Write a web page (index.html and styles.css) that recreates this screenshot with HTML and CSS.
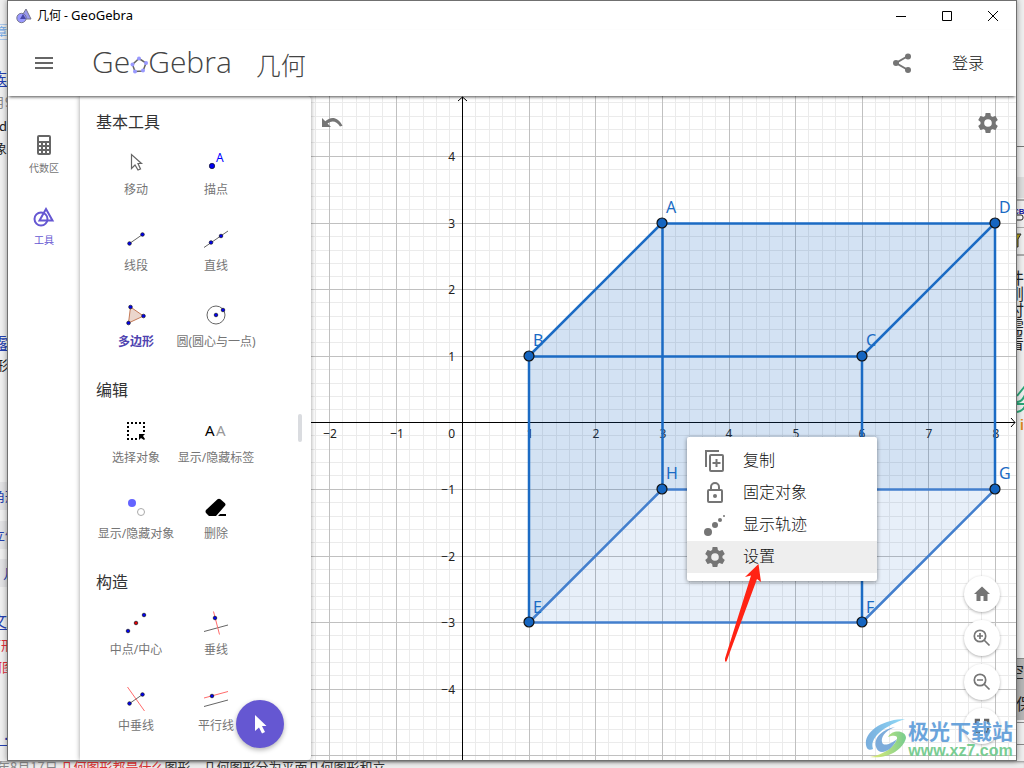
FILE: index.html
```html
<!DOCTYPE html>
<html lang="zh-CN">
<head>
<meta charset="utf-8">
<title>几何 - GeoGebra</title>
<link rel="stylesheet" href="styles.css">
</head>
<body class="desktop">
<svg class="strip" aria-hidden="true">
  <rect width="8" height="100%" fill="#efefef"/>
  <path d="M0 24.500h8M0 39.500h8" stroke="#a9c8ec"/>
  <path d="M0 482h8v28h-8zM0 521h8v28h-8zM0 559h8v28h-8z" fill="#e2e2e4"/>
  <g class="strip-text">
    <text x="-4" y="36" class="t11 sky">章</text>
    <text x="-9" y="85" class="t16 link">族</text>
    <text x="-8" y="107" class="t13 grey">月9</text>
    <text x="-1" y="131" class="t13">d</text>
    <text x="-6" y="153" class="t13">象</text>
    <text x="-8" y="349" class="t16 link">露</text>
    <text x="-5" y="370" class="t13">形</text>
    <text x="-8" y="501" class="t13 link">角形</text>
    <text x="-8" y="540" class="t13 link">立体</text>
    <text x="3" y="578" class="t13 link">几</text>
    <text x="-9" y="627" class="t16 link">文</text>
    <text x="-12" y="650" class="t13 red">何形</text>
    <text x="-11" y="672" class="t13 red">何图</text>
    <text x="4" y="740" class="t16 link">.</text>
  </g>
  <path d="M0 86.500h8M0 350.500h8M0 629.500h8M0 745.500h8" stroke="#2440b0"/>
</svg>

<main class="window">
  <div class="titlebar">
    <svg width="16" height="16" viewBox="0 0 16 16"><path d="M10 1l5 10H4z" fill="#9999ee" stroke="#77778c"/><circle cx="5.500" cy="10" r="4.700" fill="#9999ff" stroke="#77778c"/><path d="M7 6l3 5H4z" fill="#4848a8"/></svg>
    <span class="titlebar-text">几何 - <span class="titlebar-app">GeoGebra</span></span>
    <div class="window-controls">
      <button aria-label="最小化"><svg width="12" height="12"><path d="M1 6.500h10"/></svg></button>
      <button aria-label="最大化"><svg width="12" height="12"><path d="M1.500 1.500h9v9h-9z"/></svg></button>
      <button aria-label="关闭"><svg width="12" height="12"><path d="M1 1l10 10M11 1L1 11"/></svg></button>
    </div>
  </div>

  <header class="header">
    <button class="menu-button" aria-label="菜单"><svg width="18" height="12"><path d="M0 1h18M0 6h18M0 11h18" stroke="#666" stroke-width="2"/></svg></button>
    <div class="logo"><span>Ge</span><svg width="18" height="18" viewBox="0 0 18 18"><path d="M9 2.500L16 7l-3 8-8 .5L2.500 8.500z" fill="none" stroke="#666" stroke-width="1.500"/><g fill="#9999ff"><circle cx="9" cy="2.500" r="2"/><circle cx="16" cy="7" r="2"/><circle cx="13" cy="14.500" r="2"/><circle cx="5" cy="15.500" r="2"/><circle cx="2.500" cy="8.500" r="2"/></g></svg><span>Gebra</span></div>
    <h1 class="app-name">几何</h1>
    <button class="share-button" aria-label="分享"><svg width="20" height="20" viewBox="0 0 20 20"><path d="M16 3L4 10l12 7" fill="none" stroke="#757575" stroke-width="2"/><g fill="#757575"><circle cx="16" cy="3.500" r="3"/><circle cx="4" cy="10" r="3"/><circle cx="16" cy="17" r="3"/></g></svg></button>
    <button class="login-button">登录</button>
  </header>

  <div class="workspace">
    <nav class="nav">
      <button class="nav-item"><svg width="24" height="24" viewBox="0 0 24 24"><rect x="5" y="2" width="14" height="20" rx="2" fill="#666"/><path d="M7 4h10v4H7zM7 10h2v2H7zM11 10h2v2h-2zM15 10h2v2h-2zM7 14h2v2H7zM11 14h2v2h-2zM15 14h2v2h-2zM7 18h2v2H7zM11 18h2v2h-2zM15 18h2v2h-2z" fill="#fff"/></svg>代数区</button>
      <button class="nav-item nav-active"><svg width="24" height="24" viewBox="0 0 24 24" fill="none" stroke="#6557d2" stroke-width="2"><circle cx="9" cy="14" r="6.500"/><path d="M14 4l6.500 11.500h-13z"/></svg>工具</button>
    </nav>

    <aside class="tools">
      <section>
        <h2>基本工具</h2>
        <div class="tool-grid">
          <button class="tool"><svg viewBox="0 0 32 32"><path d="M11.500 7.500v14l3.500-3.500 3 5 2.500-1-2.500-5.500h3.500z" fill="#fff" stroke="#666" stroke-width="1.200"/></svg>移动</button>
          <button class="tool"><svg viewBox="0 0 32 32"><circle cx="12" cy="19" r="2.700" class="dot"/><text x="16" y="15" class="point-letter">A</text></svg>描点</button>
          <button class="tool"><svg viewBox="0 0 32 32"><path d="M9.500 20.500l13-9" class="ln"/><circle cx="9.500" cy="20.500" r="1.800" class="dot"/><circle cx="22.500" cy="11.500" r="1.800" class="dot"/></svg>线段</button>
          <button class="tool"><svg viewBox="0 0 32 32"><path d="M4 24.500L28 8" class="ln"/><circle cx="11" cy="19.500" r="1.800" class="dot"/><circle cx="21" cy="13" r="1.800" class="dot"/></svg>直线</button>
          <button class="tool tool-active"><svg viewBox="0 0 32 32"><path d="M10.500 8l13 9-15 7z" fill="#ebd6cc" stroke="#c47a58"/><circle cx="10.500" cy="8" r="1.800" class="dot"/><circle cx="23.500" cy="17" r="1.800" class="dot"/><circle cx="8.500" cy="24" r="1.800" class="dot"/></svg>多边形</button>
          <button class="tool"><svg viewBox="0 0 32 32"><circle cx="16" cy="16" r="9" fill="none" stroke="#666"/><circle cx="16" cy="16" r="1.800" class="dot"/><circle cx="23" cy="11" r="1.800" class="dot"/></svg>圆(圆心与一点)</button>
        </div>
      </section>
      <section>
        <h2>编辑</h2>
        <div class="tool-grid">
          <button class="tool"><svg viewBox="0 0 32 32"><path d="M7 8h18M8 11v14M24 11v6M11 24h6" fill="none" stroke="#000" stroke-width="2" stroke-dasharray="2 2"/><path d="M19 19h6l-2 2 2 3-1 1-3-2-2 2z"/></svg>选择对象</button>
          <button class="tool"><svg viewBox="0 0 32 32"><text x="5" y="21" class="aa">A</text><text x="16" y="21" class="aa aa-light">A</text></svg>显示/隐藏标签</button>
          <button class="tool"><svg viewBox="0 0 32 32"><circle cx="12" cy="12" r="4" fill="#6464ff"/><circle cx="21" cy="21" r="3.500" fill="#fff" stroke="#aaa"/></svg>显示/隐藏对象</button>
          <button class="tool"><svg viewBox="0 0 32 32"><path d="M17.500 8.200q1.500-1 3 0l4.500 4q1 1.300 0 2.600L16 25h-7l-3-3q-1-1.500 0-3zM20 23h6v2h-8z"/></svg>删除</button>
        </div>
      </section>
      <section>
        <h2>构造</h2>
        <div class="tool-grid">
          <button class="tool"><svg viewBox="0 0 32 32"><circle cx="8" cy="24" r="1.800" class="dot"/><circle cx="16" cy="16" r="1.800" class="dot red-dot"/><circle cx="24" cy="8" r="1.800" class="dot"/></svg>中点/中心</button>
          <button class="tool"><svg viewBox="0 0 32 32"><path d="M4 24.500L28 18" class="ln"/><path d="M13.500 4.500l6 23" class="ln red-ln"/><circle cx="15" cy="11" r="1.800" class="dot"/></svg>垂线</button>
          <button class="tool"><svg viewBox="0 0 32 32"><path d="M9.500 20.500l13-9" class="ln"/><path d="M7.500 4l17 24" class="ln red-ln"/><circle cx="9.500" cy="20.500" r="1.800" class="dot"/><circle cx="22.500" cy="11.500" r="1.800" class="dot"/></svg>中垂线</button>
          <button class="tool"><svg viewBox="0 0 32 32"><path d="M4 23.500L28 17" class="ln"/><path d="M4 15L28 8.500" class="ln red-ln"/><circle cx="12" cy="13" r="1.800" class="dot"/></svg>平行线</button>
        </div>
      </section>
      <div class="scroll-thumb"></div>
      <button class="fab" aria-label="移动"><svg width="24" height="24" viewBox="0 0 24 24"><path d="M7 3v16l4-3.500 3 6 3-1.500-3-6h4.500z" fill="#fff"/></svg></button>
    </aside>

    <div class="canvas">
      <svg class="graph" viewBox="311 96 705 664" preserveAspectRatio="xMinYMin slice" role="img" aria-label="长方体">
        <defs>
          <path id="minor-v" d="M13.500 0v1000M27.500 0v1000M40.500 0v1000M53.500 0v1000"/>
          <path id="major-v" d="M.5 0v1000"/>
          <path id="minor-h" d="M0 13.500h1200M0 27.500h1200M0 40.500h1200M0 53.500h1200"/>
          <path id="major-h" d="M0 .5h1200"/>
        </defs>
        <g class="minor">
          <use href="#minor-v" x="262"/><use href="#minor-v" x="329"/><use href="#minor-v" x="396"/><use href="#minor-v" x="462"/><use href="#minor-v" x="529"/><use href="#minor-v" x="595"/><use href="#minor-v" x="662"/><use href="#minor-v" x="729"/><use href="#minor-v" x="795"/><use href="#minor-v" x="862"/><use href="#minor-v" x="928"/><use href="#minor-v" x="995"/>
          <use href="#minor-h" y="89"/><use href="#minor-h" y="156"/><use href="#minor-h" y="223"/><use href="#minor-h" y="289"/><use href="#minor-h" y="356"/><use href="#minor-h" y="422"/><use href="#minor-h" y="489"/><use href="#minor-h" y="556"/><use href="#minor-h" y="622"/><use href="#minor-h" y="689"/>
        </g>
        <g class="major">
          <use href="#major-v" x="329"/><use href="#major-v" x="396"/><use href="#major-v" x="529"/><use href="#major-v" x="595"/><use href="#major-v" x="662"/><use href="#major-v" x="729"/><use href="#major-v" x="795"/><use href="#major-v" x="862"/><use href="#major-v" x="928"/><use href="#major-v" x="995"/>
          <use href="#major-h" y="156"/><use href="#major-h" y="223"/><use href="#major-h" y="289"/><use href="#major-h" y="356"/><use href="#major-h" y="489"/><use href="#major-h" y="556"/><use href="#major-h" y="622"/><use href="#major-h" y="689"/><use href="#major-h" y="755"/>
        </g>
        <g class="axis"><path d="M462.500 97v663M458 101l4.500-4 4.500 4M311 422.500h704M1011 418l4 4.500-4 4.500"/></g>
        <g class="ticks tick-x">
          <text x="330" y="438">−2</text><text x="397" y="438">−1</text><text x="530" y="438">1</text><text x="596" y="438">2</text><text x="663" y="438">3</text><text x="729" y="438">4</text><text x="796" y="438">5</text><text x="862" y="438">6</text><text x="929" y="438">7</text><text x="996" y="438">8</text>
        </g>
        <g class="ticks tick-y">
          <text x="455" y="161">4</text><text x="455" y="228">3</text><text x="455" y="294">2</text><text x="455" y="361">1</text><text x="455" y="438">0</text><text x="455" y="494">−1</text><text x="455" y="561">−2</text><text x="455" y="627">−3</text><text x="455" y="694">−4</text>
        </g>
        <g>
          <path class="face" d="M662 223H995V489H662L529 622V356z"/>
          <path class="face face-light" d="M662 489H995L862 622H529z"/>
          <path class="edge edge-light" d="M662 489.500H995L862 622.500H529z"/>
          <path class="edge" d="M662 223.500H995V489M662 223L529 356V622M529 356.500H862V622M862 356L995 223M662.500 223V489"/>
          <g class="vertex">
            <circle cx="662" cy="223" r="5"/><circle cx="995" cy="223" r="5"/><circle cx="529" cy="356" r="5"/><circle cx="862" cy="356" r="5"/><circle cx="529" cy="622" r="5"/><circle cx="862" cy="622" r="5"/><circle cx="662" cy="489" r="5"/><circle cx="995" cy="489" r="5"/>
          </g>
        </g>
        <g class="vertex-name">
          <text x="666" y="213">A</text><text x="999" y="213">D</text><text x="533" y="346">B</text><text x="866" y="346">C</text><text x="533" y="613">E</text><text x="866" y="613">F</text><text x="666" y="479">H</text><text x="999" y="479">G</text>
        </g>
      </svg>

      <button class="undo" aria-label="撤销"><svg width="24" height="24" viewBox="0 0 24 24"><path d="M2 7v9h9l-3.500-3.500q7-5 12.500 3l2.500-.8C17 4.500 10 6 5.300 10.300z" fill="#757575"/></svg></button>
      <button class="settings" aria-label="设置"><svg width="24" height="24" viewBox="0 0 24 24"><use href="#gear"/></svg></button>

      <div class="view-buttons">
        <button aria-label="标准视图"><svg width="20" height="20" viewBox="0 0 20 20"><path d="M10 2.500L2 10h2.500v7h4v-5h3v5h4v-7H18z" fill="#757575"/></svg></button>
        <button aria-label="放大"><svg width="20" height="20" viewBox="0 0 20 20"><g fill="none" stroke="#757575" stroke-width="1.700"><circle cx="8" cy="8" r="5.700"/><path d="M12 12l5.500 5.500M5 8h6M8 5v6"/></g></svg></button>
        <button aria-label="缩小"><svg width="20" height="20" viewBox="0 0 20 20"><g fill="none" stroke="#757575" stroke-width="1.700"><circle cx="8" cy="8" r="5.700"/><path d="M12 12l5.500 5.500M5 8h6"/></g></svg></button>
        <button aria-label="全屏"><svg width="20" height="20" viewBox="0 0 20 20"><path d="M4 8V4h4M12 4h4v4M16 12v4h-4M8 16H4v-4" fill="none" stroke="#666" stroke-width="2.500"/></svg></button>
      </div>

      <div class="context-menu" role="menu">
        <button role="menuitem"><svg width="24" height="24" viewBox="0 0 24 24"><g fill="none" stroke="#757575" stroke-width="2"><path d="M3 18V2h13"/><rect x="7" y="6" width="13" height="16" rx="1"/><path d="M9.500 14h8M13.500 10v8"/></g></svg><span>复制</span></button>
        <button role="menuitem"><svg width="24" height="24" viewBox="0 0 24 24"><g fill="none" stroke="#757575" stroke-width="2"><rect x="5" y="9" width="14" height="12" rx="1"/><path d="M8 9V6a4 4 0 0 1 8 0v3"/></g><circle cx="12" cy="15" r="2" fill="#757575"/></svg><span>固定对象</span></button>
        <button role="menuitem"><svg width="24" height="24" viewBox="0 0 24 24"><g fill="#757575"><circle cx="5" cy="19" r="4"/><circle cx="12" cy="12" r="3"/><circle cx="17" cy="7" r="2"/><circle cx="21" cy="3" r="1"/></g></svg><span>显示轨迹</span></button>
        <button role="menuitem" class="current"><svg width="24" height="24" viewBox="0 0 24 24"><path id="gear" fill="#757575" d="M19.430 12.980c.04-.32.07-.64.07-.98s-.03-.66-.07-.98l2.110-1.650c.19-.15.24-.42.12-.64l-2-3.460c-.12-.22-.39-.3-.61-.22l-2.490 1c-.52-.4-1.080-.73-1.690-.98l-.38-2.650A.49.49 0 0 0 14 2h-4c-.25 0-.46.18-.49.42l-.38 2.650c-.61.25-1.170.59-1.690.98l-2.490-1c-.23-.09-.49 0-.61.22l-2 3.460c-.13.22-.07.49.12.64l2.110 1.650c-.04.32-.07.65-.07.98s.03.66.07.98l-2.110 1.650c-.19.15-.24.42-.12.64l2 3.460c.12.22.39.3.61.22l2.490-1c.52.4 1.080.73 1.690.98l.38 2.650c.03.24.24.42.49.42h4c.25 0 .46-.18.49-.42l.38-2.650c.61-.25 1.170-.59 1.690-.98l2.490 1c.23.09.49 0 .61-.22l2-3.460c.12-.22.07-.49-.12-.64zM12 15.800a3.800 3.800 0 1 1 0-7.600 3.800 3.800 0 0 1 0 7.600z"/></svg><span>设置</span></button>
      </div>
      <svg class="pointer-arrow" viewBox="724 564 38 98" aria-hidden="true"><path d="M758.500 564l2.500 18-4-3-30.500 82.500-1.500 0v-3l26-83-6 1.500z" fill="#ff2314"/></svg>

      <div class="watermark">
        <svg width="44" height="42" viewBox="0 0 44 42"><defs><linearGradient id="blue-fade" x1="0" x2="1"><stop stop-color="#6aa5da"/><stop offset="1" stop-color="#85d8f8"/></linearGradient><linearGradient id="green-fade" x1="0" x2="1"><stop stop-color="#e5ee67"/><stop offset="1" stop-color="#6ac884"/></linearGradient></defs><path d="M41 1C20 1 0 13 2 27c1 6 5 5 7 4C5 20 20 8 41 1z" fill="url(#blue-fade)"/><path d="M6 39C24 41 39 32 42 20c0-8-14-9-18-1 5-2 10-2 9 2C31 28 20 37 6 39z" fill="url(#green-fade)"/><path d="M12 29c-3-10 8-18 19-20-11 4-14 11-13 15 1 5 9 2 15-3-5 12-18 18-21 8z" fill="#6fa4d8"/></svg>
        <div><strong>极光下载站</strong><span>www.xz7.com</span></div>
      </div>
    </div>
  </div>
</main>

<svg class="strip" aria-hidden="true">
  <rect width="8" height="100%" fill="#eeeeee"/>
  <path d="M0 146.500h8" stroke="#777"/>
  <path d="M0 177h8v21h-8z" fill="#dcdcdc"/>
  <path d="M0 200h8M0 255h8" stroke="#aaa" stroke-width="2"/>
  <path d="M0 227.500h8" stroke="#aaa"/>
  <text x="-4" y="214" class="cb">CB</text>
  <rect x="-3" y="215" width="9" height="5" rx="2" fill="#fff" stroke="#222"/>
  <path d="M-1 234h5l-3 5v8h-2z" fill="#b7a319" stroke="#333"/>
  <g class="strip-text">
    <text x="-9" y="284" class="t16">件</text><text x="-9" y="300" class="t16">刚</text><text x="-9" y="316" class="t16">时</text><text x="-9" y="333" class="t16">需</text><text x="-9" y="349" class="t16">看</text>
  </g>
  <path d="M0 396l8-10M0 402q5 0 8-7M0 404h8M0 412q6-1 8-6" fill="none" stroke="#2aa677" stroke-width="2"/>
  <text x="3" y="430" class="orange-i">i</text>
  <rect y="659" width="8" height="61" fill="#b5b5b5"/>
  <path d="M0 658.500h8M0 722.500h8M0 744.500h8" stroke="#888"/>
  <g class="strip-text"><text x="-9" y="678" class="t16">空</text><text x="-1" y="710" class="t16">保</text></g>
</svg>

<div class="ticker"><span class="date">年8月17日</span> <em>几何图形都是什么</em>图形，几何图形分为平面几何图形和立</div>
</body>
</html>
```

FILE: styles.css
```css
* { box-sizing: border-box; }

body, button {
  font-family: "Noto Sans", "Noto Sans CJK SC", sans-serif;
}

button {
  padding: 0;
  border: 0;
  background: none;
  color: inherit;
  cursor: pointer;
}

svg { display: block; flex: none; }

.desktop {
  margin: 0;
  height: 100vh;
  display: grid;
  grid-template-columns: 7px minmax(0, 1fr) 7px;
  grid-template-rows: minmax(0, 1fr) 7px;
  background: #ececec;
  overflow: hidden;
}

.strip { width: 7px; height: 100%; overflow: hidden; }
.strip-text { font-family: "Noto Sans CJK SC", sans-serif; fill: #222; }
.t11 { font-size: 11px; }
.t13 { font-size: 13px; }
.t16 { font-size: 16px; }
.sky { fill: #6ea6e6; }
.link { fill: #2440b0; }
.grey { fill: #888; }
.red { fill: #e0303a; }
.cb { font: bold 8px "Liberation Sans", sans-serif; fill: #1414a0; }
.orange-i { font: bold 14px "Liberation Sans", sans-serif; fill: #e08a1e; }

.ticker {
  grid-column: 1 / -1;
  overflow: hidden;
  white-space: nowrap;
  font-family: "Noto Sans CJK SC", sans-serif;
  font-size: 13px;
  line-height: 12px;
  color: #333;
  text-indent: -3px;
  box-shadow: inset 0 3px 3px -2px #888;
}
.ticker em { font-style: normal; color: #dc3232; }
.date { color: #888; }

/* Window frame */
.window {
  display: flex;
  flex-direction: column;
  background: #fff;
  border: 1px solid #707070;
  box-shadow: 0 0 6px rgba(0, 0, 0, .4);
  position: relative;
  overflow: hidden;
}

.titlebar {
  display: flex;
  align-items: center;
  gap: 5px;
  height: 29px;
  padding-left: 8px;
  flex: none;
}
.titlebar-text { font-size: 12px; line-height: 18px; color: #000; }
.titlebar-app { font-size: 13px; }
.window-controls { display: flex; margin-left: auto; }
.window-controls button { width: 46px; height: 29px; display: grid; place-items: center; }
.window-controls path { fill: none; stroke: #000; }

.header {
  display: flex;
  align-items: center;
  height: 66px;
  flex: none;
  color: #666;
  background: #fff;
  box-shadow: 0 2px 3px -1px rgba(0, 0, 0, .7);
  position: relative;
  z-index: 3;
}
.menu-button { width: 72px; height: 48px; display: grid; place-items: center; }
.logo {
  display: flex;
  align-items: center;
  margin-left: 12px;
  font-family: "Open Sans", "Noto Sans", sans-serif;
  font-weight: 300;
  font-size: 30px;
  line-height: 40px;
  padding-bottom: 2px;
  color: #444;
}
.logo svg { margin-top: 6px; }
.app-name {
  margin: 0 0 0 24px;
  padding-top: 2px;
  font-family: "Noto Sans CJK SC", sans-serif;
  font-size: 25px;
  font-weight: 300;
  line-height: 32px;
  color: #444;
}
.share-button { margin-left: auto; width: 40px; height: 40px; display: grid; place-items: center; }
.login-button { margin: 0 32px 0 30px; padding-bottom: 3px; font-size: 16px; font-weight: 300; color: #111; }

.workspace { display: flex; flex: 1; min-height: 0; }

/* Left navigation */
.nav { width: 72px; flex: none; padding-top: 25px; background: #fff; }
.nav-item {
  display: flex;
  flex-direction: column;
  align-items: center;
  gap: 3px;
  width: 100%;
  height: 72px;
  padding-top: 12px;
  font-size: 10px;
  line-height: 16px;
  color: #757575;
}
.nav-active { color: #6557d2; }

/* Tool panel */
.tools {
  position: relative;
  z-index: 2;
  width: 231px;
  flex: none;
  padding: 6px 16px 0;
  background: #fff;
  border-radius: 0 4px 4px 0;
  box-shadow: 0 0 5px rgba(0, 0, 0, .4);
}
.tools h2 {
  margin: 0;
  font-size: 16px;
  font-weight: 400;
  line-height: 40px;
  color: #333;
}
.tool-grid { display: grid; grid-template-columns: 80px 80px; }
.tool {
  display: flex;
  flex-direction: column;
  align-items: center;
  gap: 1px;
  height: 76px;
  padding-top: 5px;
  font-size: 12px;
  line-height: 20px;
  color: #757575;
  white-space: nowrap;
}
.tool svg { width: 32px; height: 32px; }
.tool-active { color: #4f43b0; font-weight: 700; }
.dot { fill: #0000f0; stroke: #112; stroke-width: .7; }
.red-dot { fill: #e00000; }
.ln { fill: none; stroke: #666; }
.red-ln { stroke: #ff6b6b; }
.point-letter { font: 12px "Noto Sans", sans-serif; fill: #00f; }
.aa { font: 15px "Noto Sans", sans-serif; fill: #000; }
.aa-light { fill: #999; }

.scroll-thumb {
  position: absolute;
  right: 9px;
  top: 318px;
  width: 4px;
  height: 28px;
  border-radius: 2px;
  background: #dadce0;
}
.fab {
  position: absolute;
  right: 27px;
  bottom: 12px;
  width: 48px;
  height: 48px;
  display: grid;
  place-items: center;
  border-radius: 50%;
  background: #6557d2;
  box-shadow: 0 2px 5px rgba(0, 0, 0, .3);
}

/* Graphics view */
.canvas { position: relative; flex: 1; min-width: 0; overflow: hidden; }
.graph { width: 100%; height: 100%; }
.minor, .major, .axis { fill: none; }
.minor { stroke: #ebebeb; }
.major { stroke: #c0c0c0; }
.axis { stroke: #000; }
.ticks { font: 12px "Noto Sans", sans-serif; fill: #222; }
.tick-x { text-anchor: middle; }
.tick-y { text-anchor: end; }
.face { fill: #1565c0; fill-opacity: .19; }
.face-light { fill-opacity: .1; }
.edge { fill: none; stroke: #1b6bc4; stroke-width: 2.500; stroke-linejoin: round; }
.edge-light { stroke: #437fcd; }
.vertex { fill: #1565c0; stroke: #111; stroke-width: 1.200; }
.vertex-name { font: 16px "Noto Sans", sans-serif; fill: #1b6bc4; }

.undo { position: absolute; left: 9px; top: 15px; }
.settings { position: absolute; right: 16px; top: 15px; }

.view-buttons {
  position: absolute;
  right: 16px;
  bottom: 16px;
  display: flex;
  flex-direction: column;
  gap: 8px;
}
.view-buttons button {
  width: 36px;
  height: 36px;
  display: grid;
  place-items: center;
  border-radius: 50%;
  background: #fff;
  box-shadow: 0 1px 3px rgba(0, 0, 0, .3);
}

.context-menu {
  position: absolute;
  left: 376px;
  top: 341px;
  width: 190px;
  padding: 8px 0;
  background: #fff;
  border-radius: 2px;
  box-shadow: 0 1px 4px rgba(0, 0, 0, .45);
}
.context-menu button {
  display: flex;
  align-items: center;
  gap: 16px;
  width: 100%;
  height: 32px;
  padding-left: 16px;
  font-size: 16px;
  font-weight: 300;
  color: #111;
}
.context-menu span { padding-bottom: 4px; }
.context-menu .current { background: #eee; }

.pointer-arrow { position: absolute; left: 413px; top: 468px; width: 38px; height: 98px; }

.watermark {
  position: absolute;
  right: 3px;
  bottom: 0;
  display: flex;
  align-items: center;
  font-family: "Noto Sans CJK SC", sans-serif;
  opacity: .9;
}
.watermark div { display: flex; flex-direction: column; align-items: center; }
.watermark strong { font-size: 21px; line-height: 24px; color: #5c9bd8; }
.watermark span {
  font-family: "Liberation Sans", sans-serif;
  font-weight: 700;
  font-size: 16px;
  line-height: 18px;
  color: #6cc888;
}
```
